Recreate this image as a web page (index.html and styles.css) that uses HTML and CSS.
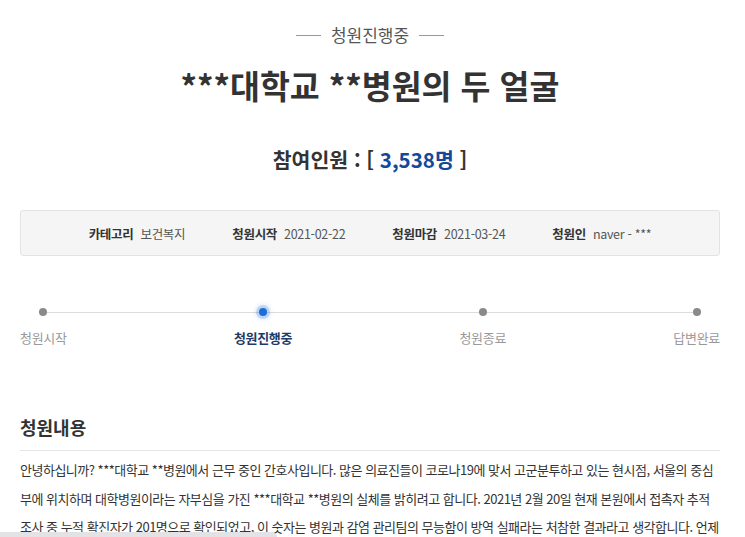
FILE: index.html
```html
<!DOCTYPE html>
<html lang="ko">
<head>
<meta charset="utf-8">
<link rel="stylesheet" href="styles.css">
</head>
<body>
<div class="page">
  <div class="status"><span class="dash"></span><span>청원진행중</span><span class="dash"></span></div>
  <h1 class="title">***대학교 **병원의 두 얼굴</h1>
  <div class="count">참여인원 : [ <span class="num">3,538명</span> ]</div>
  <ul class="info">
    <li><b>카테고리</b>보건복지</li>
    <li><b>청원시작</b>2021-02-22</li>
    <li><b>청원마감</b>2021-03-24</li>
    <li><b>청원인</b>naver - ***</li>
  </ul>
  <div class="progress">
    <div class="step first"><span class="dot"></span><span class="label">청원시작</span></div>
    <div class="step on"><span class="dot"></span><span class="label">청원진행중</span></div>
    <div class="step"><span class="dot"></span><span class="label">청원종료</span></div>
    <div class="step last"><span class="dot"></span><span class="label">답변완료</span></div>
  </div>
  <h2 class="section">청원내용</h2>
  <p class="body">안녕하십니까? ***대학교 **병원에서 근무 중인 간호사입니다. 많은 의료진들이 코로나19에 맞서 고군분투하고 있는 현시점, 서울의 중심부에 위치하며 대학병원이라는 자부심을 가진 ***대학교 **병원의 실체를 밝히려고 합니다. 2021년 2월 20일 현재 본원에서 접촉자 추적 조사 중 누적 확진자가 201명으로 확인되었고, 이 숫자는 병원과 감염 관리팀의 무능함이 방역 실패라는 처참한 결과라고 생각합니다. 언제부터 시작되었는지 모를 감염은 이미 병원 전체로 퍼져 있었습니다.</p>
</div>
<div class="bottombar"></div>
</body>
</html>
```
FILE: styles.css
```css
html, body {
  margin: 0;
  padding: 0;
  background: #fff;
  overflow: hidden;
  height: 537px;
}
body {
  font-family: "Noto Sans CJK KR", "Noto Sans", sans-serif;
  color: #333;
}
.page {
  width: 700px;
  margin: 0 20px;
  padding-top: 22px;
}
.status {
  display: flex;
  justify-content: center;
  align-items: center;
  gap: 10px;
  font-size: 17px;
  color: #555;
  line-height: 26px;
}
.dash {
  width: 25px;
  height: 1px;
  background: #999;
}
.title {
  margin: 15px 0 0;
  text-align: center;
  font-size: 32.5px;
  font-weight: 700;
  line-height: 44px;
  color: #333;
}
.count {
  margin-top: 38px;
  text-align: center;
  font-size: 20.5px;
  font-weight: 700;
  line-height: 28px;
  color: #333;
}
.num { color: #124a9a; }
.info {
  list-style: none;
  margin: 37px 0 0;
  padding: 0;
  height: 44px;
  border: 1px solid #e3e3e3;
  border-radius: 3px;
  background: #f5f5f5;
  display: flex;
  justify-content: center;
  align-items: center;
  gap: 47px;
  font-size: 12.5px;
  letter-spacing: -0.3px;
  color: #555;
}
.info b {
  font-weight: 700;
  color: #333;
  margin-right: 7px;
}
.progress {
  margin-top: 51px;
  display: flex;
  justify-content: space-between;
  position: relative;
}
.progress::before {
  content: "";
  position: absolute;
  left: 22px;
  right: 23px;
  top: 5px;
  height: 1px;
  background: #dcdcdc;
}
.step {
  display: flex;
  flex-direction: column;
  align-items: center;
  position: relative;
}
.dot {
  width: 8px;
  height: 8px;
  border-radius: 50%;
  background: #8a8a8a;
  margin-top: 1px;
  margin-bottom: 12px;
}
.step.on .dot {
  background: #1a6fd8;
  box-shadow: 0 0 0 3px rgba(26, 111, 216, 0.2), 0 0 4px 4px rgba(26, 111, 216, 0.12);
}
.label {
  font-size: 13px;
  line-height: 20px;
  letter-spacing: -0.3px;
  color: #999;
}
.step.on .label {
  color: #1d3b66;
  font-weight: 700;
}
.section {
  margin: 66px 0 0;
  padding-bottom: 10px;
  border-bottom: 1px solid #e5e5e5;
  font-size: 18px;
  font-weight: 700;
  line-height: 26px;
  color: #333;
}
.body {
  margin: 5px 0 0;
  font-size: 13px;
  line-height: 28.5px;
  color: #333;
  letter-spacing: -0.5px;
}
.bottombar {
  position: fixed;
  left: 0;
  bottom: 0;
  width: 277px;
  height: 5px;
  background: #e3e3e6;
  border-top-right-radius: 5px;
}
```
